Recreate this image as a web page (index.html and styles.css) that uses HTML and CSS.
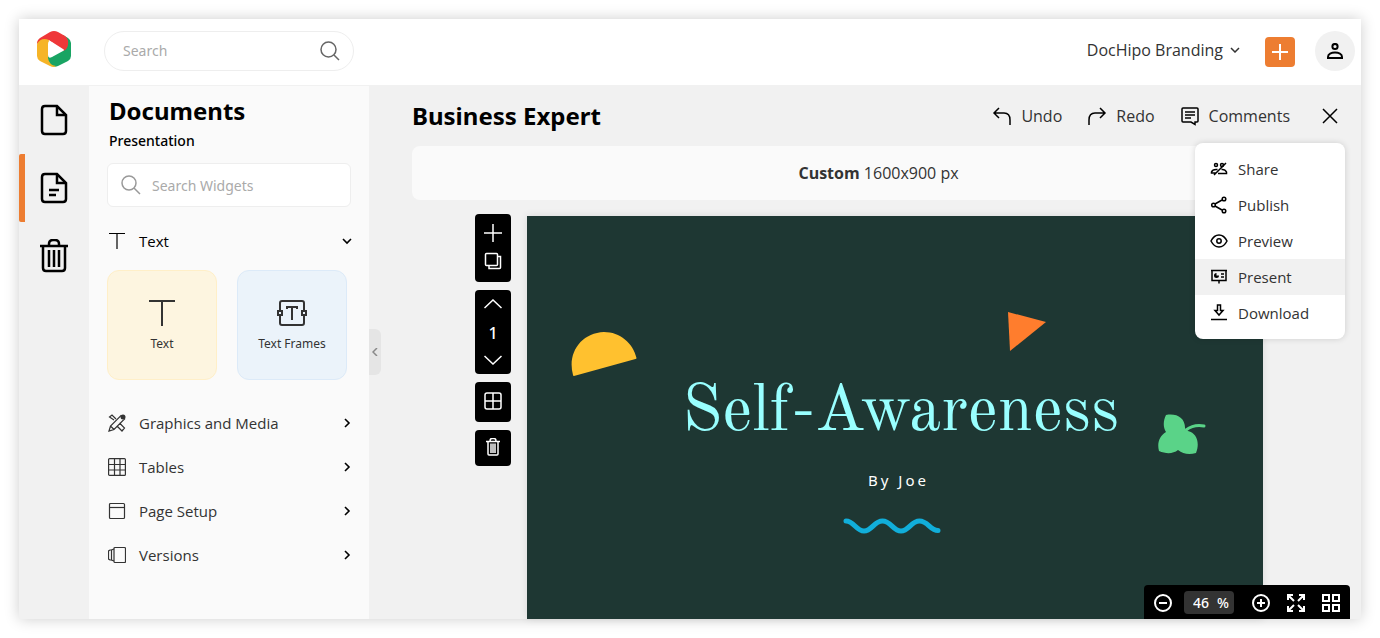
FILE: index.html
```html
<!DOCTYPE html>
<html lang="en">

<head>
    <meta charset="UTF-8">
    <meta name="viewport" content="width=device-width, initial-scale=1.0">
    <title>Business Expert - DocHipo</title>
    <link rel="stylesheet" href="styles.css">
</head>

<body>
    <div class="app">
        <header class="topbar">
            <a href="#" class="logo" aria-label="Home">
                <svg width="36" height="38" viewBox="0 0 36 38">
                    <path fill="#19a463" d="M27 5l5 3q3 2 3 5v13q0 3-3 5l-10 5q-4 2-7-1-4-3-4-10l18-6z" />
                    <path fill="#f6b427" d="M1 15q0-6 5-7h7l-1 20q1 7 8 8-2 2-6 0L4 31q-3-2-3-5z" />
                    <path fill="#ef3739" d="M1 14q0-4 3-6l10-6q4-2 8 0l7 4q4 3 3 9-1 5-5 6l-14-11q-8-3-12 4z" />
                    <path fill="#fff" d="M12 14q0-4 4-2l11 7q2 1 0 2l-11 6q-4 2-4-2z" />
                </svg>
            </a>
            <form class="search-box">
                <input type="text" id="search" placeholder="Search" aria-label="Search">
                <button type="submit" aria-label="Search">
                    <svg width="20" height="20" viewBox="0 0 20 20"><circle cx="8.5" cy="8.5" r="7.5" /><path d="M14 14l5 5" /></svg>
                </button>
            </form>
            <div class="account">
                <button type="button" class="workspace">DocHipo Branding
                    <svg width="10" height="6" viewBox="0 0 10 6"><path d="M1 1l4 4 4-4" /></svg>
                </button>
                <button type="button" class="create" aria-label="Create">
                    <svg width="16" height="16" viewBox="0 0 16 16"><path d="M8 0v16M0 8h16" /></svg>
                </button>
                <button type="button" class="avatar" aria-label="Profile">
                    <svg width="16" height="16" viewBox="0 0 16 16"><circle cx="8" cy="3.5" r="2.6" /><path d="M1 15v-1c0-6 14-6 14 0v1z" /></svg>
                </button>
            </div>
        </header>

        <div class="workarea">
            <nav class="rail">
                <a href="#" aria-label="New document">
                    <svg width="28" height="32" viewBox="0 0 28 32"><path d="M5 2h12l9 9v16q0 3-3 3H5q-3 0-3-3V5q0-3 3-3z" /><path d="M17 2v9h9" /></svg>
                </a>
                <a href="#" class="active" aria-label="Documents">
                    <svg width="28" height="32" viewBox="0 0 28 32"><path d="M5 2h12l9 9v16q0 3-3 3H5q-3 0-3-3V5q0-3 3-3z" /><path d="M17 2v9h9M9 18h10M9 23h7" /></svg>
                </a>
                <a href="#" aria-label="Trash">
                    <svg width="28" height="34" viewBox="0 0 28 34"><path d="M0 7h28M3 7v22q0 3 3 3h16q3 0 3-3V7M9 7V5q0-4 4-4h2q4 0 4 4v2M9 11v17M14 11v17M19 11v17" /></svg>
                </a>
            </nav>

            <aside class="sidebar">
                <h2>Documents</h2>
                <p class="doc-type">Presentation</p>
                <div class="widget-search">
                    <svg width="20" height="20" viewBox="0 0 20 20"><circle cx="8" cy="8" r="7" /><path d="M13 13l6 6" /></svg>
                    <input type="text" id="searchWidgets" placeholder="Search Widgets" aria-label="Search Widgets">
                </div>
                <button type="button" class="section open">
                    <svg width="18" height="18" viewBox="0 0 18 18"><path d="M1 1.5h16M9 1.5V17" /></svg>
                    <span>Text</span>
                    <svg class="arrow" width="10" height="10" viewBox="0 0 10 10"><path d="M1 3l4 4 4-4" /></svg>
                </button>
                <div class="tiles">
                    <button type="button" class="tile tile-text">
                        <svg width="30" height="28" viewBox="0 0 30 28"><path d="M2 2h26M15 2v25" /></svg>
                        <span>Text</span>
                    </button>
                    <button type="button" class="tile tile-frames">
                        <svg width="30" height="28" viewBox="0 0 30 28">
                            <path d="M3 11V4q0-2 2-2h20q2 0 2 2v7M27 17v7q0 2-2 2H5q-2 0-2-2v-7M1 12h4v4H1zM25 12h4v4h-4zM10 8h10M15 8v13M10 7v3M20 7v3" />
                        </svg>
                        <span>Text Frames</span>
                    </button>
                </div>
                <button type="button" class="section">
                    <svg width="18" height="18" viewBox="0 0 18 18"><path d="M1 17l1.500-5L13 1.500l3.500 3.500L6 15.500zM6 6L1.500 3 4 1l4 4M11.500 9l5 5-2.500 3-5-5M2.500 12L6 15.500" /><circle class="solid" cx="15" cy="3" r="2.500" /></svg>
                    <span>Graphics and Media</span>
                    <svg class="arrow" width="10" height="10" viewBox="0 0 10 10"><path d="M3 1l4 4-4 4" /></svg>
                </button>
                <button type="button" class="section">
                    <svg width="18" height="18" viewBox="0 0 18 18"><rect x=".6" y=".6" width="16.800" height="16.800" rx="1" /><path d="M6.500 0v18M12 0v18M0 6.500h18M0 12h18" /></svg>
                    <span>Tables</span>
                    <svg class="arrow" width="10" height="10" viewBox="0 0 10 10"><path d="M3 1l4 4-4 4" /></svg>
                </button>
                <button type="button" class="section">
                    <svg width="18" height="18" viewBox="0 0 18 18"><rect x="1.500" y="1.500" width="15" height="15" rx="1" /><path d="M1 5.500h16" /></svg>
                    <span>Page Setup</span>
                    <svg class="arrow" width="10" height="10" viewBox="0 0 10 10"><path d="M3 1l4 4-4 4" /></svg>
                </button>
                <button type="button" class="section">
                    <svg width="18" height="18" viewBox="0 0 18 18"><rect x="6" y="1.500" width="11.500" height="15" rx="1" /><path d="M6 3L3.500 4v10L6 15M3.500 4H2L.500 5v8L2 14h1.500" /></svg>
                    <span>Versions</span>
                    <svg class="arrow" width="10" height="10" viewBox="0 0 10 10"><path d="M3 1l4 4-4 4" /></svg>
                </button>
                <button type="button" class="collapse" aria-label="Collapse panel">
                    <svg width="6" height="8" viewBox="0 0 6 8"><path d="M5 0L1 4l4 4" /></svg>
                </button>
            </aside>

            <main class="editor">
                <div class="editor-head">
                    <h1>Business Expert</h1>
                    <div class="actions">
                        <button type="button">
                            <svg width="20" height="20" viewBox="0 0 20 20"><path d="M7 2L2 7l5 5M2 7h10q6 0 6 7v5" /></svg>Undo
                        </button>
                        <button type="button">
                            <svg width="20" height="20" viewBox="0 0 20 20"><path d="M13 2l5 5-5 5M18 7H8q-6 0-6 7v5" /></svg>Redo
                        </button>
                        <button type="button">
                            <svg width="20" height="20" viewBox="0 0 20 20"><path d="M3 2h14q1 0 1 1v12q0 1-1 1h-2v2.500L11 16H3q-1 0-1-1V3q0-1 1-1zM5 6h10M5 9h10M5 12h6" /></svg>Comments
                        </button>
                        <button type="button" class="close" aria-label="Close">
                            <svg width="16" height="16" viewBox="0 0 16 16"><path d="M1 1l14 14M15 1L1 15" /></svg>
                        </button>
                    </div>
                </div>
                <div class="size-bar"><strong>Custom</strong> 1600x900 px</div>

                <div class="stage">
                    <div class="page-tools">
                        <div class="tool-group">
                            <button type="button" aria-label="Add page">
                                <svg width="18" height="18" viewBox="0 0 18 18"><path d="M9 0v18M0 9h18" /></svg>
                            </button>
                            <button type="button" aria-label="Duplicate page">
                                <svg width="18" height="18" viewBox="0 0 18 18"><rect x="1.500" y="1.500" width="12" height="12" rx="1" /><path d="M14 4.500h2.500v11q0 1-1 1H5V14" /></svg>
                            </button>
                        </div>
                        <div class="tool-group pager">
                            <button type="button" aria-label="Previous page">
                                <svg width="18" height="10" viewBox="0 0 18 10"><path d="M.500 9L9 1l8.500 8" /></svg>
                            </button>
                            <span class="page-number">1</span>
                            <button type="button" aria-label="Next page">
                                <svg width="18" height="10" viewBox="0 0 18 10"><path d="M.500 1L9 9l8.500-8" /></svg>
                            </button>
                        </div>
                        <div class="tool-group">
                            <button type="button" aria-label="Grid">
                                <svg width="18" height="18" viewBox="0 0 18 18"><rect x="1" y="1" width="16" height="16" rx="2" /><path d="M9 1v16M1 9h16" /></svg>
                            </button>
                        </div>
                        <div class="tool-group">
                            <button type="button" aria-label="Delete page">
                                <svg width="14" height="18" viewBox="0 0 14 18"><path d="M0 3.500h14M2 4v12q0 1 1 1h8q1 0 1-1V4M4 3q0-2.500 2-2.500h2q2 0 2 2.500M5 5.500V15M7 5.500V15M9 5.500V15" /></svg>
                            </button>
                        </div>
                    </div>

                    <div class="slide">
                        <svg class="shape half-circle" width="66" height="46" viewBox="0 0 66 46">
                            <path fill="#ffc12f" d="M3 45Q2 45 2 44C-4 22 10 2 33 1 49 1 62 12 65.500 27q0 1-1 1z" />
                        </svg>
                        <svg class="shape triangle" width="39" height="40" viewBox="0 0 39 40"><path fill="#ff7d2d" d="M0 0l38 10L2 39z" /></svg>
                        <svg class="shape leaf" width="50" height="42" viewBox="0 0 50 42">
                            <path fill="#5ad388" d="M8 1C19-1 28 4 27 16l3 1c9 2 12 12 8 22-7 2-13 1-18-3-5 4-12 4-19 1-2-7 0-15 7-19C5 13 5 7 8 1z" />
                            <path fill="none" stroke="#5ad388" stroke-width="3" stroke-linecap="round" d="M28 16q8-6 18-4" />
                        </svg>
                        <p class="slide-title">Self-Awareness</p>
                        <p class="slide-author">By Joe</p>
                        <svg class="shape wave" width="98" height="16" viewBox="0 0 98 16">
                            <path fill="none" stroke="#11aeda" stroke-width="5" stroke-linecap="round" d="M3 3c8 0 10 10 18 10S31 3 39.500 3 50 13 58 13 68 3 76.500 3 87 12.500 95 12.500" />
                        </svg>
                    </div>
                </div>

                <div class="menu">
                    <button type="button">
                        <svg width="18" height="18" viewBox="0 0 18 18"><circle cx="6" cy="5" r="1.500" /><circle cx="12" cy="5" r="1.500" /><path d="M6 13H1.500v-1q1-3 6-2.500M16 3L4 15M8 13.500h8.500v-1.500q-1.500-3-5-2.500" /></svg>Share
                    </button>
                    <button type="button">
                        <svg width="18" height="18" viewBox="0 0 18 18"><circle cx="3.500" cy="9" r="1.800" /><circle cx="14" cy="3" r="1.800" /><circle cx="14" cy="15" r="1.800" /><path d="M5 8l7-4M5 10l7 4" /></svg>Publish
                    </button>
                    <button type="button">
                        <svg width="18" height="18" viewBox="0 0 18 18"><path d="M1 9c4-8 12-8 16 0-4 8-12 8-16 0z" /><circle cx="9" cy="9" r="2.200" /></svg>Preview
                    </button>
                    <button type="button" class="selected">
                        <svg width="18" height="18" viewBox="0 0 18 18"><path d="M1 2.500h16M2 2.500v10h14v-10M9 13v2.500M11 6h3M11 9h3" /><path class="solid" d="M6.500 5v2.500H9A2.500 2.500 0 1 1 6.500 5z" /></svg>Present
                    </button>
                    <button type="button">
                        <svg width="18" height="18" viewBox="0 0 18 18"><path d="M7.500 1h3v5.500H13L9 11 5 6.500h2.500zM1 15.500h16" /></svg>Download
                    </button>
                </div>

                <div class="zoom-bar">
                    <button type="button" aria-label="Zoom out">
                        <svg width="18" height="18" viewBox="0 0 18 18"><circle cx="9" cy="9" r="8" /><path d="M5 9h8" /></svg>
                    </button>
                    <label class="zoom-value"><input type="text" id="zoom" value="46" aria-label="Zoom level">%</label>
                    <button type="button" aria-label="Zoom in">
                        <svg width="18" height="18" viewBox="0 0 18 18"><circle cx="9" cy="9" r="8" /><path d="M5 9h8M9 5v8" /></svg>
                    </button>
                    <button type="button" aria-label="Full screen">
                        <svg width="18" height="18" viewBox="0 0 18 18"><path d="M1 6V1h5M12 1h5v5M17 12v5h-5M6 17H1v-5M1 1l6 6M17 1l-6 6M17 17l-6-6M1 17l6-6" /></svg>
                    </button>
                    <button type="button" aria-label="All pages">
                        <svg width="18" height="18" viewBox="0 0 18 18"><path d="M1 1h6v6H1zM11 1h6v6h-6zM1 11h6v6H1zM11 11h6v6h-6z" /></svg>
                    </button>
                </div>
            </main>
        </div>
    </div>
</body>

</html>
```
FILE: styles.css
```css
* {
    box-sizing: border-box;
}

body {
    margin: 0;
    padding: 19px;
    background: #fff;
    font-family: "Noto Sans", "Open Sans", sans-serif;
    font-size: 15px;
    color: #333;
}

h1,
h2,
p {
    margin: 0;
}

button,
input {
    font: inherit;
    color: inherit;
    border: none;
    background: none;
    padding: 0;
}

button {
    display: flex;
    align-items: center;
    cursor: pointer;
}

input:focus {
    outline: none;
}

svg {
    display: block;
    flex: none;
    fill: none;
    stroke: currentColor;
    stroke-width: 1.5;
}

.solid {
    fill: currentColor;
    stroke: none;
}

.app {
    display: flex;
    flex-direction: column;
    height: calc(100vh - 38px);
    background: #f1f1f1;
    box-shadow: 0 0 14px rgba(0, 0, 0, 0.2);
}

/* top bar */
.topbar {
    display: flex;
    align-items: center;
    height: 67px;
    padding: 0 6px 2px 17px;
    background: #fff;
    border-bottom: 1px solid #f1f1f1;
}

.logo {
    padding-bottom: 4px;
}

.logo svg {
    stroke: none;
}

.search-box {
    display: flex;
    align-items: center;
    width: 250px;
    height: 40px;
    margin-left: 32px;
    padding: 0 13px 1px 18px;
    border: 1px solid #eee;
    border-radius: 20px;
    color: #666;
}

.search-box input {
    flex: 1;
    min-width: 0;
    font-size: 14px;
}

input::placeholder {
    color: #aaa;
    opacity: 1;
}

.account {
    display: flex;
    align-items: center;
    margin-left: auto;
}

.workspace {
    gap: 7px;
    padding-bottom: 2px;
    font-family: "Open Sans", sans-serif;
    font-size: 16px;
}

.create {
    justify-content: center;
    width: 30px;
    height: 30px;
    margin: 1px 20px 0 25px;
    background: #ed7d31;
    border-radius: 4px;
    color: #fff;
}

.create svg,
.avatar svg {
    stroke-width: 2;
}

.avatar {
    justify-content: center;
    width: 40px;
    height: 40px;
    background: #f1f1f1;
    border-radius: 50%;
    color: #000;
}

.workarea {
    display: flex;
    flex: 1;
    min-height: 0;
}

/* left rail */
.rail {
    width: 70px;
}

.rail a {
    display: flex;
    align-items: center;
    justify-content: center;
    height: 68px;
    color: #000;
    border-left: 6px solid transparent;
    border-right: 6px solid transparent;
}

.rail a.active {
    border-left-color: #ed7d31;
    border-radius: 2px;
}

.rail svg {
    stroke-width: 2.5;
}

/* widgets panel */
.sidebar {
    position: relative;
    width: 280px;
    padding: 8px 18px;
    background: #fafafa;
}

.sidebar h2 {
    padding-left: 2px;
    font-size: 24px;
    line-height: 34px;
    color: #000;
}

.doc-type {
    padding-left: 2px;
    font-size: 14px;
    font-weight: 500;
    line-height: 26px;
    color: #000;
}

.widget-search {
    display: flex;
    align-items: center;
    gap: 11px;
    height: 44px;
    margin: 9px 0 12px;
    padding: 0 13px;
    background: #fff;
    border: 1px solid #eee;
    border-radius: 6px;
    color: #999;
}

.widget-search input {
    flex: 1;
    min-width: 0;
    font-size: 14px;
}

.section {
    gap: 13px;
    width: 100%;
    height: 44px;
    padding-left: 1px;
    font-family: "Open Sans", sans-serif;
    text-align: left;
}

.section span {
    flex: 1;
}

.section svg {
    stroke-width: 1.2;
}

.section .arrow {
    margin-right: -1px;
    color: #000;
    stroke-width: 1.6;
}

.section.open {
    color: #000;
}

.tiles {
    display: flex;
    gap: 20px;
    margin: 7px 0 21px;
}

.tile {
    flex-direction: column;
    justify-content: center;
    gap: 8px;
    width: 110px;
    height: 110px;
    border: 1px solid;
    border-radius: 12px;
    font-size: 12px;
}

.tile svg {
    stroke: #333;
    stroke-width: 2;
}

.tile-text {
    background: #fdf5e0;
    border-color: #ffefc8;
}

.tile-frames {
    background: #ebf3fa;
    border-color: #dceaf8;
}

.collapse {
    position: absolute;
    top: 243px;
    left: 100%;
    justify-content: center;
    width: 12px;
    height: 46px;
    background: #e5e5e5;
    border-radius: 0 6px 6px 0;
    color: #888;
}

/* editor */
.editor {
    position: relative;
    display: flex;
    flex: 1;
    flex-direction: column;
    min-width: 0;
    padding: 0 16px 0 43px;
}

.editor-head {
    display: flex;
    align-items: center;
    justify-content: space-between;
    height: 60px;
    padding-right: 7px;
}

.editor-head h1 {
    font-size: 24px;
    line-height: 34px;
    color: #000;
}

.actions {
    display: flex;
    align-items: center;
    gap: 25px;
    font-family: "Open Sans", sans-serif;
    font-size: 16px;
}

.actions button {
    gap: 9px;
}

.actions svg {
    color: #000;
}

.actions .close {
    margin-left: 7px;
}

.size-bar {
    padding: 16px;
    background: #fafafa;
    border-radius: 8px;
    font-family: "Open Sans", sans-serif;
    font-size: 16px;
    line-height: 22px;
    text-align: center;
}

.stage {
    display: flex;
    flex: 1;
    gap: 16px;
    min-height: 0;
    padding: 14px 82px 0 63px;
}

.page-tools {
    display: flex;
    flex-direction: column;
    gap: 8px;
    width: 36px;
}

.tool-group {
    display: flex;
    flex-direction: column;
    align-items: center;
    gap: 10px;
    padding: 10px 0 12px;
    background: #000;
    border-radius: 4px;
    color: #fff;
}

.tool-group:last-child {
    padding: 8px 0 10px;
}

.pager {
    gap: 9px;
    padding: 9px 0;
}

.page-number {
    padding: 4px 0 2px;
    font-size: 16px;
    font-weight: 500;
    line-height: 22px;
}

.slide {
    position: relative;
    flex: 1;
    margin-top: 2px;
    background: #1e3733;
    box-shadow: 0 0 8px rgba(0, 0, 0, 0.1);
    overflow: hidden;
}

.shape {
    position: absolute;
    stroke: none;
}

.half-circle {
    top: 115px;
    left: 44px;
}

.triangle {
    top: 96px;
    left: 481px;
}

.leaf {
    top: 198px;
    left: 631px;
}

.wave {
    top: 302px;
    left: 316px;
}

.slide-title {
    position: absolute;
    top: 158px;
    left: 155px;
    font-family: "Old Standard TT", "Liberation Serif", serif;
    font-size: 65px;
    line-height: 78px;
    white-space: nowrap;
    color: #9ff;
}

.slide-author {
    position: absolute;
    top: 254px;
    left: 341px;
    font-size: 15px;
    line-height: 20px;
    letter-spacing: 3px;
    color: #fff;
}

.menu {
    position: absolute;
    top: 57px;
    right: 16px;
    width: 150px;
    padding: 8px 0;
    background: #fff;
    border-radius: 8px;
    box-shadow: 0 0 6px rgba(0, 0, 0, 0.15);
    font-family: "Open Sans", sans-serif;
}

.menu button {
    gap: 10px;
    width: 100%;
    height: 36px;
    padding-left: 15px;
}

.menu button.selected {
    background: #f1f1f1;
}

.menu svg {
    color: #000;
}

.zoom-bar {
    position: absolute;
    right: 11px;
    bottom: 0;
    display: flex;
    align-items: center;
    gap: 17px;
    height: 34px;
    padding: 1px 10px 0;
    background: #000;
    border-radius: 4px 4px 0 0;
    color: #fff;
}

.zoom-bar svg {
    stroke-width: 2;
}

.zoom-value {
    display: flex;
    align-items: center;
    width: 50px;
    height: 23px;
    margin: 0 1px 0 -5px;
    padding: 0 5px 0 9px;
    background: #333;
    border-radius: 4px;
    font-size: 14px;
    font-weight: 500;
}

.zoom-value input {
    flex: 1;
    min-width: 0;
}
```
